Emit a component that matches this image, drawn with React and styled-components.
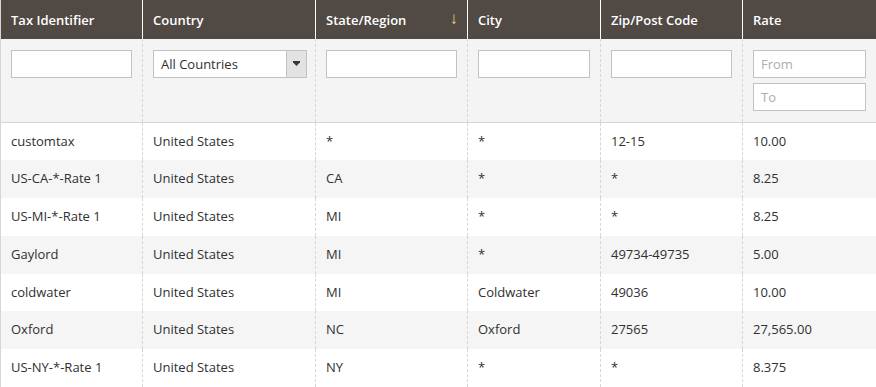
import React from 'react'
import styled, { createGlobalStyle } from 'styled-components'

const dark = '#514943'
const line = '#d6d6d6'
const text = '#303030'

const GlobalStyle = createGlobalStyle`
  body {
    margin: 0;
    background: #fff;
    font-family: 'Open Sans', 'Liberation Sans', sans-serif;
  }
`

const Grid = styled.table`
  width: 876px;
  border-collapse: collapse;
  table-layout: fixed;
  border: 1px solid ${line};
  border-top: 0;
  font-size: 13px;
  line-height: 17.7px;
  color: ${text};
`

const HeadCell = styled.th`
  position: relative;
  background: ${dark};
  color: #fff;
  font-weight: 600;
  text-align: left;
  padding: 12px 10px 9px;
  border-left: 1px solid #fff;
  &:first-child {
    border-left: 0;
  }
`

const SortArrow = styled.span`
  position: absolute;
  right: 9px;
  top: 9px;
  color: #e3d07f;
  font-weight: 400;
  font-size: 17px;
`

const FilterRow = styled.tr`
  background: #f4f4f4;
  border-bottom: 1px solid ${line};
`

const FilterCell = styled.td`
  vertical-align: top;
  padding: 11px 10px 11px;
  border-left: 1px dashed ${line};
  &:first-child {
    border-left: 0;
  }
`

const Stack = styled.div`
  display: flex;
  flex-direction: column;
  gap: 5px;
`

const TextInput = styled.input`
  display: block;
  box-sizing: border-box;
  width: 100%;
  height: 28px;
  border: 1px solid #c2c2c2;
  background: #fff;
  padding: 0 7px;
  font-family: inherit;
  font-size: 13px;
  color: ${text};
  outline: none;
  &::placeholder {
    color: #adadad;
  }
`

const SelectBox = styled.div`
  box-sizing: border-box;
  display: flex;
  height: 28px;
  width: 154px;
  border: 1px solid #c2c2c2;
  background: #fff;
`

const SelectLabel = styled.span`
  flex: 1;
  padding: 0 7px;
  line-height: 26px;
  color: ${text};
`

const SelectButton = styled.span`
  width: 19px;
  border-left: 1px solid #c2c2c2;
  background: #e3e3e3;
  display: flex;
  align-items: center;
  justify-content: center;
`

const Row = styled.tr`
  background: ${(p) => (p.$striped ? '#f5f5f5' : '#fff')};
`

const Cell = styled.td`
  padding: 10px 10px;
  border-left: 1px dashed ${line};
  white-space: nowrap;
  &:first-child {
    border-left: 0;
  }
`

const columns = [
  { title: 'Tax Identifier', width: 142 },
  { title: 'Country', width: 173 },
  { title: 'State/Region', width: 152, sorted: true },
  { title: 'City', width: 133 },
  { title: 'Zip/Post Code', width: 142 },
  { title: 'Rate', width: 134 },
]

const rows = [
  ['customtax', 'United States', '*', '*', '12-15', '10.00'],
  ['US-CA-*-Rate 1', 'United States', 'CA', '*', '*', '8.25'],
  ['US-MI-*-Rate 1', 'United States', 'MI', '*', '*', '8.25'],
  ['Gaylord', 'United States', 'MI', '*', '49734-49735', '5.00'],
  ['coldwater', 'United States', 'MI', 'Coldwater', '49036', '10.00'],
  ['Oxford', 'United States', 'NC', 'Oxford', '27565', '27,565.00'],
  ['US-NY-*-Rate 1', 'United States', 'NY', '*', '*', '8.375'],
]

const Caret = () => (
  <svg width="7" height="5" viewBox="0 0 7 5">
    <path d="M0 0h7v1.2L3.5 5 0 1.2z" fill="#41362f" />
  </svg>
)

export default function App() {
  return (
    <>
      <GlobalStyle />
      <Grid>
        <colgroup>
          {columns.map((c) => (
            <col key={c.title} style={{ width: c.width }} />
          ))}
        </colgroup>
        <thead>
          <tr>
            {columns.map((c) => (
              <HeadCell key={c.title}>
                {c.title}
                {c.sorted && <SortArrow>↓</SortArrow>}
              </HeadCell>
            ))}
          </tr>
        </thead>
        <tbody>
          <FilterRow>
            <FilterCell>
              <TextInput />
            </FilterCell>
            <FilterCell>
              <SelectBox>
                <SelectLabel>All Countries</SelectLabel>
                <SelectButton>
                  <Caret />
                </SelectButton>
              </SelectBox>
            </FilterCell>
            <FilterCell>
              <TextInput />
            </FilterCell>
            <FilterCell>
              <TextInput />
            </FilterCell>
            <FilterCell>
              <TextInput />
            </FilterCell>
            <FilterCell>
              <Stack>
                <TextInput placeholder="From" />
                <TextInput placeholder="To" />
              </Stack>
            </FilterCell>
          </FilterRow>
          {rows.map((r, i) => (
            <Row key={r[0]} $striped={i % 2 === 1}>
              {r.map((v, j) => (
                <Cell key={j}>{v}</Cell>
              ))}
            </Row>
          ))}
        </tbody>
      </Grid>
    </>
  )
}
